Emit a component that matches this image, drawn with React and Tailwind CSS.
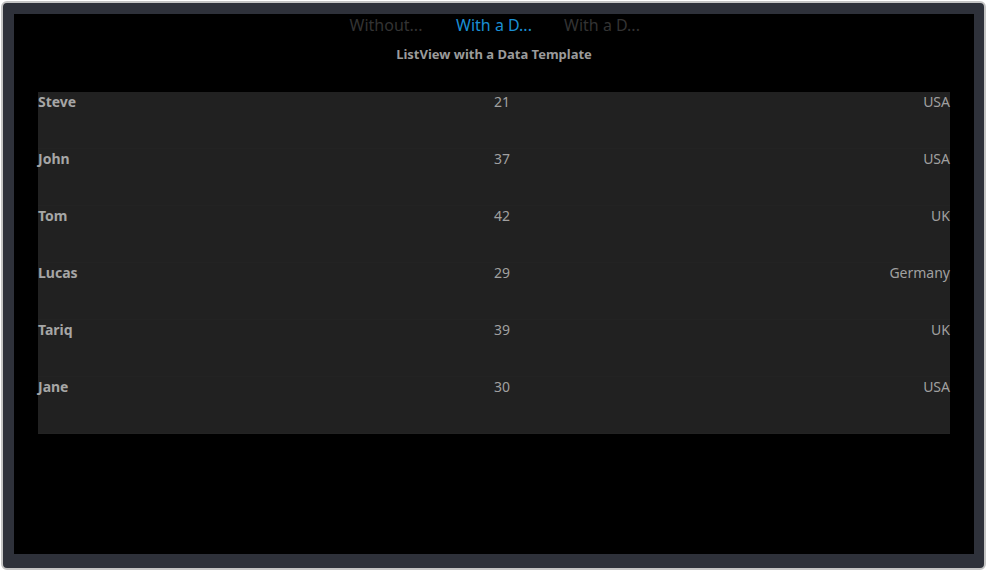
import React from 'react';

const people = [
    { name: 'Steve', age: 21, country: 'USA' },
    { name: 'John', age: 37, country: 'USA' },
    { name: 'Tom', age: 42, country: 'UK' },
    { name: 'Lucas', age: 29, country: 'Germany' },
    { name: 'Tariq', age: 39, country: 'UK' },
    { name: 'Jane', age: 30, country: 'USA' },
];

const tabs = ['Without...', 'With a D...', 'With a D...'];

export default function App() {
    return (
        <div className="w-[987px] h-[572px] bg-white p-[1px]" style={{ fontFamily: '"Noto Sans", "Open Sans", sans-serif' }}>
            {/* device frame */}
            <div className="w-[985px] h-[569px] rounded-[6px] border-2 border-[#c4c4c4] bg-[#2e313a] pl-[11px] pt-[11px] pr-[10px] pb-[13px]">
                <div className="w-[960px] h-[540px] bg-black flex flex-col">
                    {/* Tabs */}
                    <div className="flex justify-center h-[24px]">
                        {tabs.map((t, i) => (
                            <div
                                key={i}
                                className={`w-[108px] text-center text-[16px] leading-[22px] ${i === 1 ? 'text-[#1a8fd4]' : 'text-[#333333]'}`}
                            >
                                {t}
                            </div>
                        ))}
                    </div>

                    {/* Title */}
                    <div className="mt-[7px] text-center text-[13px] leading-[18px] font-bold text-[#9b9b9b]">
                        ListView with a Data Template
                    </div>

                    {/* List */}
                    <div className="mt-[29px] mx-[24px] bg-[#212121]">
                        {people.map((p) => (
                            <div key={p.name} className="grid grid-cols-2 h-[57px] border-b border-[#232323] text-[14px] leading-[19px]">
                                <div className="font-bold text-[#a6a6a6]">{p.name}</div>
                                <div className="flex justify-between text-[#a0a0a0]">
                                    <span>{p.age}</span>
                                    <span>{p.country}</span>
                                </div>
                            </div>
                        ))}
                    </div>
                </div>
            </div>
        </div>
    );
}
